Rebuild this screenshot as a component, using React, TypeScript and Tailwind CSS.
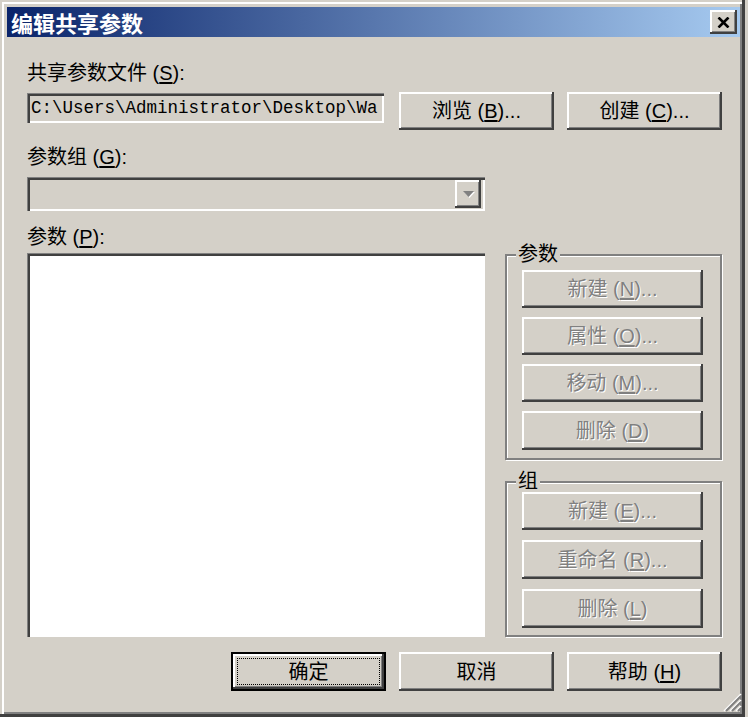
import React from "react";

const raised =
  "shadow-[inset_-2px_-2px_0_#404040,inset_2px_2px_0_#ffffff,inset_-3px_-3px_0_#808080]";
const sunken =
  "shadow-[inset_1px_1px_0_#808080,inset_3px_3px_0_#404040,inset_-2px_-2px_0_#ffffff]";

function Mn({ c }: { c: string }) {
  return (
    <>
      (<span className="underline underline-offset-[2px]">{c}</span>)
    </>
  );
}

function Btn({
  children,
  disabled,
  className = "",
}: {
  children: React.ReactNode;
  disabled?: boolean;
  className?: string;
}) {
  return (
    <div
      className={`flex items-center justify-center bg-[#d4d0c8] ${raised} text-[20px] leading-[22px] whitespace-nowrap ${
        disabled ? "text-[#808080] [text-shadow:1px_1px_0_#ffffff]" : "text-black"
      } ${className}`}
    >
      {children}
    </div>
  );
}

function Group({
  title,
  className = "",
  children,
}: {
  title: string;
  className?: string;
  children: React.ReactNode;
}) {
  return (
    <div
      className={`relative border-2 border-[#808080] shadow-[1px_1px_0_#ffffff,inset_1px_1px_0_#ffffff] ${className}`}
    >
      <span className="absolute -top-[13px] left-[9px] bg-[#d4d0c8] px-[2px] text-[20px] leading-[22px] text-black">
        {title}
      </span>
      {children}
    </div>
  );
}

export default function App() {
  return (
    <div className="w-[748px] h-[717px] bg-[#d4d0c8] overflow-hidden font-['Liberation_Sans','Noto_Sans_CJK_SC',sans-serif] text-black">
      <div className="relative w-[745px] h-[717px] bg-[#d4d0c8] flex flex-col shadow-[inset_-3px_-3px_0_#404040,inset_2px_2px_0_#d4d0c8,inset_4px_4px_0_#ffffff,inset_-5px_-5px_0_#808080]">
        {/* Title bar */}
        <div className="mt-[7px] ml-[7px] mr-[5px] h-[30px] flex items-center justify-between bg-linear-to-r/srgb from-[#0a246a] to-[#a6caf0] pl-[4px] pr-[3px]">
          <span className="text-white font-bold text-[22px] leading-[24px] font-['Noto_Sans_CJK_SC',sans-serif]">
            编辑共享参数
          </span>
          <div className={`w-[27px] h-[24px] bg-[#d4d0c8] ${raised} flex items-center justify-center`}>
            <svg width="13" height="11" viewBox="0 0 13 11">
              <path d="M1.5 0.5 L11.5 10.5 M11.5 0.5 L1.5 10.5" stroke="#000" strokeWidth="2.6" />
            </svg>
          </div>
        </div>

        <div className="flex flex-col pl-[27px] pr-[23px]">
          <div className="mt-[25px] text-[20px] leading-[22px]">
            共享参数文件 <Mn c="S" />:
          </div>

          <div className="mt-[8px] flex items-start">
            <div
              className={`mt-[1px] w-[357px] h-[30px] bg-[#d4d0c8] ${sunken} flex items-center pl-[4px] pr-[2px] overflow-hidden`}
            >
              <div className="min-w-0 flex-1 overflow-hidden whitespace-nowrap font-['Liberation_Mono',monospace] text-[17.5px] leading-[20px]">
                {"C:\\Users\\Administrator\\Desktop\\Wa"}
              </div>
            </div>
            <Btn className="ml-[15px] w-[155px] h-[38px]">
              浏览 <Mn c="B" />...
            </Btn>
            <Btn className="ml-[13px] w-[155px] h-[38px]">
              创建 <Mn c="C" />...
            </Btn>
          </div>

          <div className="mt-[16px] text-[20px] leading-[22px]">
            参数组 <Mn c="G" />:
          </div>

          <div
            className={`mt-[9px] w-[458px] h-[34px] bg-[#d4d0c8] ${sunken} flex justify-end items-start pt-[3px] pr-[4px]`}
          >
            <div className={`w-[26px] h-[28px] bg-[#d4d0c8] ${raised} flex items-center justify-center`}>
              <svg width="13" height="8" viewBox="0 0 13 8">
                <path d="M2 2 L13 2 L7.5 8 Z" fill="#ffffff" />
                <path d="M1 1 L12 1 L6.5 7 Z" fill="#808080" />
              </svg>
            </div>
          </div>

          <div className="mt-[15px] flex">
            <div className="flex flex-col">
              <div className="text-[20px] leading-[22px]">
                参数 <Mn c="P" />:
              </div>
              <div className={`mt-[5px] w-[458px] h-[384px] bg-white ${sunken}`} />
            </div>

            <div className="ml-[20px] mt-[28px] w-[217px] flex flex-col">
              <Group title="参数" className="h-[206px]">
                <div className="flex flex-col pl-[15px] pt-[14px] gap-[9px]">
                  <Btn disabled className="w-[181px] h-[38px]">
                    新建 <Mn c="N" />...
                  </Btn>
                  <Btn disabled className="w-[181px] h-[38px]">
                    属性 <Mn c="O" />...
                  </Btn>
                  <Btn disabled className="w-[181px] h-[38px]">
                    移动 <Mn c="M" />...
                  </Btn>
                  <Btn disabled className="w-[181px] h-[39px]">
                    删除 <Mn c="D" />
                  </Btn>
                </div>
              </Group>
              <Group title="组" className="mt-[21px] h-[156px]">
                <div className="flex flex-col pl-[15px] pt-[9px] gap-[10px]">
                  <Btn disabled className="w-[181px] h-[38px]">
                    新建 <Mn c="E" />...
                  </Btn>
                  <Btn disabled className="w-[181px] h-[39px]">
                    重命名 <Mn c="R" />...
                  </Btn>
                  <Btn disabled className="w-[181px] h-[39px]">
                    删除 <Mn c="L" />
                  </Btn>
                </div>
              </Group>
            </div>
          </div>

          <div className="mt-[15px] flex justify-end gap-[13px]">
            <div className="w-[155px] h-[39px] border-2 border-black">
              <div className={`w-full h-full bg-[#d4d0c8] ${raised} p-[4px]`}>
                <div className="w-full h-full border border-dotted border-black flex items-center justify-center text-[20px] leading-[22px]">
                  确定
                </div>
              </div>
            </div>
            <Btn className="w-[155px] h-[39px]">取消</Btn>
            <Btn className="w-[155px] h-[39px]">
              帮助 <Mn c="H" />
            </Btn>
          </div>
        </div>

        {/* size grip */}
        <svg
          className="absolute right-[3px] bottom-[5px]"
          width="20"
          height="20"
          viewBox="0 0 20 20"
        >
          <path d="M19 2 L2 19" stroke="#ffffff" strokeWidth="1.5" />
          <path d="M19 4 L4 19" stroke="#808080" strokeWidth="2" />
          <path d="M19 8 L8 19" stroke="#ffffff" strokeWidth="1.5" />
          <path d="M19 10 L10 19" stroke="#808080" strokeWidth="2" />
          <path d="M19 14 L14 19" stroke="#ffffff" strokeWidth="1.5" />
          <path d="M19 16 L16 19" stroke="#808080" strokeWidth="2" />
        </svg>
      </div>
    </div>
  );
}
